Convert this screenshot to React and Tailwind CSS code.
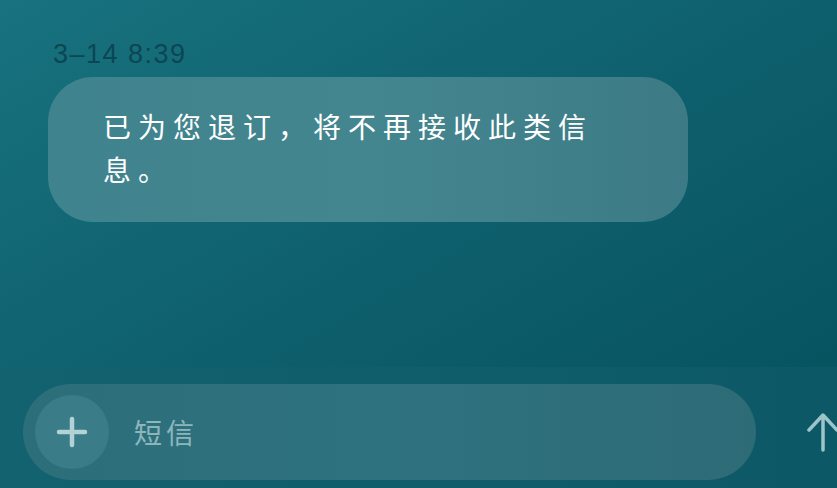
import React from "react";

export default function App() {
  return (
    <div
      className="w-[837px] h-[488px] overflow-hidden flex flex-col bg-gradient-to-br from-[#18727f] via-[#0e5f6d] to-[#05505d]"
      style={{ fontFamily: '"Noto Sans CJK SC", "Noto Sans", sans-serif' }}
    >
      {/* Conversation */}
      <div className="flex-1 flex flex-col pl-[48px] pt-[38px]">
        <div
          className="pl-[5px] h-[32px] text-[27px] leading-[32px] text-[#0c4653] tracking-[1.5px] whitespace-pre"
          style={{ fontFamily: '"Liberation Sans", sans-serif' }}
        >
          3–14 8:39
        </div>
        <div className="mt-[7px] w-[640px] h-[145px] rounded-[45px] bg-gradient-to-r from-[#3f838e] via-[#44868f] to-[#3c7b86] pl-[55px] pt-[28px]">
          <p className="w-[510px] text-[28px] leading-[43px] tracking-[7px] text-white">
            已为您退订，将不再接收此类信息。
          </p>
        </div>
      </div>

      {/* Composer */}
      <div className="h-[121px] bg-gradient-to-r from-[#136270] to-[#0c5866] flex items-start pt-[17px] pl-[23px]">
        <div className="w-[733px] h-[96px] shrink-0 rounded-full bg-gradient-to-r from-[#2c6f7b] via-[#2f727f] to-[#2d6b77] flex items-center pl-[12px]">
          <div className="w-[74px] h-[74px] rounded-full bg-[#3a7c87] flex items-center justify-center">
            <svg width="32" height="32" viewBox="0 0 32 32">
              <path d="M16 3v26M3 16h26" stroke="#b2d2d6" strokeWidth="4.5" strokeLinecap="round" />
            </svg>
          </div>
          <span className="ml-[25px] text-[28px] tracking-[4px] text-[#8db6bc]">短信</span>
        </div>
        <div className="ml-[50px] mt-[27px] shrink-0">
          <svg width="34" height="42" viewBox="0 0 34 42">
            <path d="M17 39V5M3 19L17 4l14 15" fill="none" stroke="#9cc4ca" strokeWidth="3.5" strokeLinecap="round" strokeLinejoin="round" />
          </svg>
        </div>
      </div>
    </div>
  );
}
